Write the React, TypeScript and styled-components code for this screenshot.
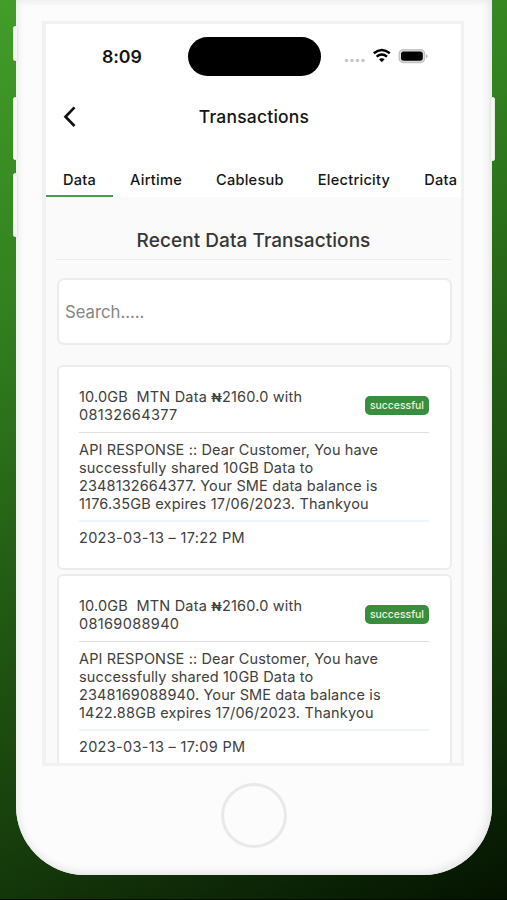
import React from 'react';
import styled, { createGlobalStyle } from 'styled-components';

const GlobalStyle = createGlobalStyle`
  * { box-sizing: border-box; }
  body {
    margin: 0;
    font-family: Inter, "Liberation Sans", sans-serif;
    -webkit-font-smoothing: antialiased;
  }
`;

const Backdrop = styled.main`
  height: 900px;
  overflow: hidden;
  background: linear-gradient(156deg, #429d29 0%, #32801f 28%, #245f15 50%, #173e0c 75%, #041301 100%);
  border-bottom: 1px solid #050a04;
`;

const Phone = styled.div`
  position: relative;
  width: 476px;
  height: 875px;
  margin-left: 16px;
  padding: 21px 0 0 26px;
  background: #fcfcfc;
  border-radius: 0 0 69px 69px;
  box-shadow: inset -3px -2px 10px #e6e6e6, inset 2px 0 7px #ececec;
`;

const SideButton = styled.span<{ $top: number; $height: number; $right?: boolean }>`
  position: absolute;
  top: ${(p) => p.$top}px;
  ${(p) => (p.$right ? 'right: -3px;' : 'left: -3px;')}
  width: 5px;
  height: ${(p) => p.$height}px;
  background: #f7f7f7;
  border: 1px solid #e4e8e2;
  border-radius: 2px;
`;

const Screen = styled.section`
  width: 422px;
  height: 745px;
  overflow: hidden;
  border: 3px solid #f1f1f1;
  border-left-width: 4px;
  background: #fafafa;
`;

const Header = styled.header`
  height: 173px;
  background: #fff;
  color: #151515;
`;

const StatusBar = styled.div`
  display: grid;
  grid-template-columns: 142px 133px 1fr;
  height: 64px;
  align-items: center;
`;

const Clock = styled.time`
  padding-left: 56px;
  font-size: 17.8px;
  font-weight: 600;
  letter-spacing: -0.1px;
`;

const Island = styled.div`
  height: 39px;
  border-radius: 20px;
  background: #000;
`;

const StatusIcons = styled.svg`
  display: block;
  margin: -1px 0 0 22px;
`;

const TitleBar = styled.div`
  display: grid;
  grid-template-columns: 60px 1fr 60px;
  height: 58px;
  align-items: center;
`;

const BackButton = styled.button`
  width: 40px;
  height: 40px;
  margin-left: 1px;
  padding: 0;
  border: 0;
  background: none;
  svg { display: block; margin: auto; }
`;

const Title = styled.h1`
  margin: -1px 0 0 1px;
  text-align: center;
  font-size: 17.5px;
  font-weight: 500;
  letter-spacing: 0.2px;
`;

const Tabs = styled.nav`
  display: flex;
  height: 51px;
`;

const Tab = styled.a<{ $active?: boolean }>`
  display: flex;
  flex: none;
  align-items: flex-end;
  padding: 0 17px 6px;
  border-bottom: 2px solid ${(p) => (p.$active ? '#459c4d' : 'transparent')};
  font-size: 14.6px;
  line-height: 18px;
  font-weight: 500;
  letter-spacing: 0.24px;
`;

const Content = styled.div`
  padding: 0 10px;
  color: #404040;
`;

const Heading = styled.h2`
  height: 63px;
  margin: 0 0 18px;
  padding-top: 32px;
  border-bottom: 1px solid #eee;
  text-align: center;
  font-size: 19px;
  line-height: 24px;
  font-weight: 500;
  letter-spacing: 0.06px;
  color: #363636;
`;

const Search = styled.input`
  display: block;
  width: 395px;
  height: 67px;
  margin-left: 1px;
  padding: 0 6px;
  border: 2px solid #ececec;
  border-radius: 7px;
  background: #fff;
  font: 400 16.7px Inter, sans-serif;
  &::placeholder { color: #868686; opacity: 1; }
`;

const Card = styled.article`
  width: 395px;
  height: 205px;
  margin: 0 0 4px 1px;
  padding: 21px 21px 0 20px;
  border: 2px solid #ececed;
  border-radius: 6px;
  background: #fff;
  font-size: 14.5px;
  line-height: 18px;
`;

const CardList = styled.div`
  padding-top: 20px;
`;

const CardTop = styled.div`
  display: flex;
  justify-content: space-between;
  height: 45px;
  border-bottom: 1px solid #dedee3;
`;

const Text = styled.p`
  margin: -0.5px 0 0;
`;

const Line = styled.span<{ $track?: number }>`
  display: block;
  white-space: pre;
  letter-spacing: ${(p) => p.$track ?? 0.13}px;
`;

const Naira = styled.span`
  font-family: Roboto, "Liberation Sans", sans-serif;
  font-size: 13px;
  font-weight: 600;
  line-height: 1;
`;

const Badge = styled.span`
  display: flex;
  align-items: center;
  justify-content: center;
  width: 64px;
  height: 19px;
  margin-top: 8px;
  border-radius: 5px;
  background: #388e3c;
  color: #e5f7df;
  font-size: 10.4px;
  font-weight: 500;
`;

const Response = styled.div`
  height: 89px;
  padding-top: 8px;
  border-bottom: 2px solid #edf6fc;
`;

const Stamp = styled.div`
  padding-top: 7px;
  letter-spacing: 0.31px;
`;

const HomeButton = styled.div`
  width: 66px;
  height: 65px;
  margin: 17px 0 0 179px;
  border: 3px solid #e9e9e9;
  border-radius: 50%;
`;

const transactions = [
  { phone: '08132664377', balance: '1176.35GB', time: '2023-03-13 – 17:22 PM' },
  { phone: '08169088940', balance: '1422.88GB', time: '2023-03-13 – 17:09 PM' },
];

export default function App() {
  return (
    <>
      <GlobalStyle />
      <Backdrop>
        <Phone>
          <SideButton $top={26} $height={35} />
          <SideButton $top={97} $height={63} />
          <SideButton $top={173} $height={64} />
          <SideButton $top={97} $height={64} $right />
          <Screen>
            <Header>
              <StatusBar>
                <Clock>8:09</Clock>
                <Island />
                <StatusIcons width="88" height="24" viewBox="0 0 88 24">
                  <g fill="#c8c8c8">
                    <circle cx="3.5" cy="16.5" r="1.8" />
                    <circle cx="9" cy="16.5" r="1.8" />
                    <circle cx="14.5" cy="16.5" r="1.8" />
                    <circle cx="20" cy="16.5" r="1.8" />
                  </g>
                  <g fill="none" stroke="#000" strokeWidth="2.5">
                    <path d="M30.8 9.2 Q38.8 2.8 46.8 9.2" />
                    <path d="M33.6 12.6 Q38.8 8.4 44 12.6" />
                  </g>
                  <path d="M36 15.3 Q38.8 13.1 41.6 15.3 L38.8 18.2 Z" fill="#000" />
                  <rect x="56.2" y="5.7" width="25.4" height="12.8" rx="4" fill="#ddd" stroke="#c4c4c4" strokeWidth="1.4" />
                  <rect x="58" y="7.4" width="21.8" height="9.4" rx="2.7" fill="#000" />
                  <path d="M83.2 10.2 Q86 12.2 83.2 14.2 Z" fill="#aaa" />
                </StatusIcons>
              </StatusBar>
              <TitleBar>
                <BackButton aria-label="Back">
                  <svg width="20" height="24" viewBox="0 0 20 24" fill="none" stroke="#111" strokeWidth="2.7">
                    <path d="M17.5 2.4 L8.5 11.7 L17.5 21" />
                  </svg>
                </BackButton>
                <Title>Transactions</Title>
              </TitleBar>
              <Tabs>
                <Tab $active>Data</Tab>
                <Tab>Airtime</Tab>
                <Tab>Cablesub</Tab>
                <Tab>Electricity</Tab>
                <Tab>Data</Tab>
              </Tabs>
            </Header>
            <Content>
              <Heading>Recent Data Transactions</Heading>
              <Search placeholder="Search....." />
              <CardList>
                {transactions.map((t) => (
                  <Card key={t.phone}>
                    <CardTop>
                      <Text>
                        <Line $track={0.18}>
                          {'10.0GB  MTN Data '}
                          <Naira>₦</Naira>
                          {'2160.0 with'}
                        </Line>
                        <Line $track={0.34}>{t.phone}</Line>
                      </Text>
                      <Badge>successful</Badge>
                    </CardTop>
                    <Response>
                      <Text>
                        <Line>API RESPONSE :: Dear Customer, You have</Line>
                        <Line $track={0.16}>successfully shared 10GB Data to</Line>
                        <Line>{`234${t.phone.slice(1)}. Your SME data balance is`}</Line>
                        <Line $track={0.2}>{`${t.balance} expires 17/06/2023. Thankyou`}</Line>
                      </Text>
                    </Response>
                    <Stamp>{t.time}</Stamp>
                  </Card>
                ))}
              </CardList>
            </Content>
          </Screen>
          <HomeButton />
        </Phone>
      </Backdrop>
    </>
  );
}
